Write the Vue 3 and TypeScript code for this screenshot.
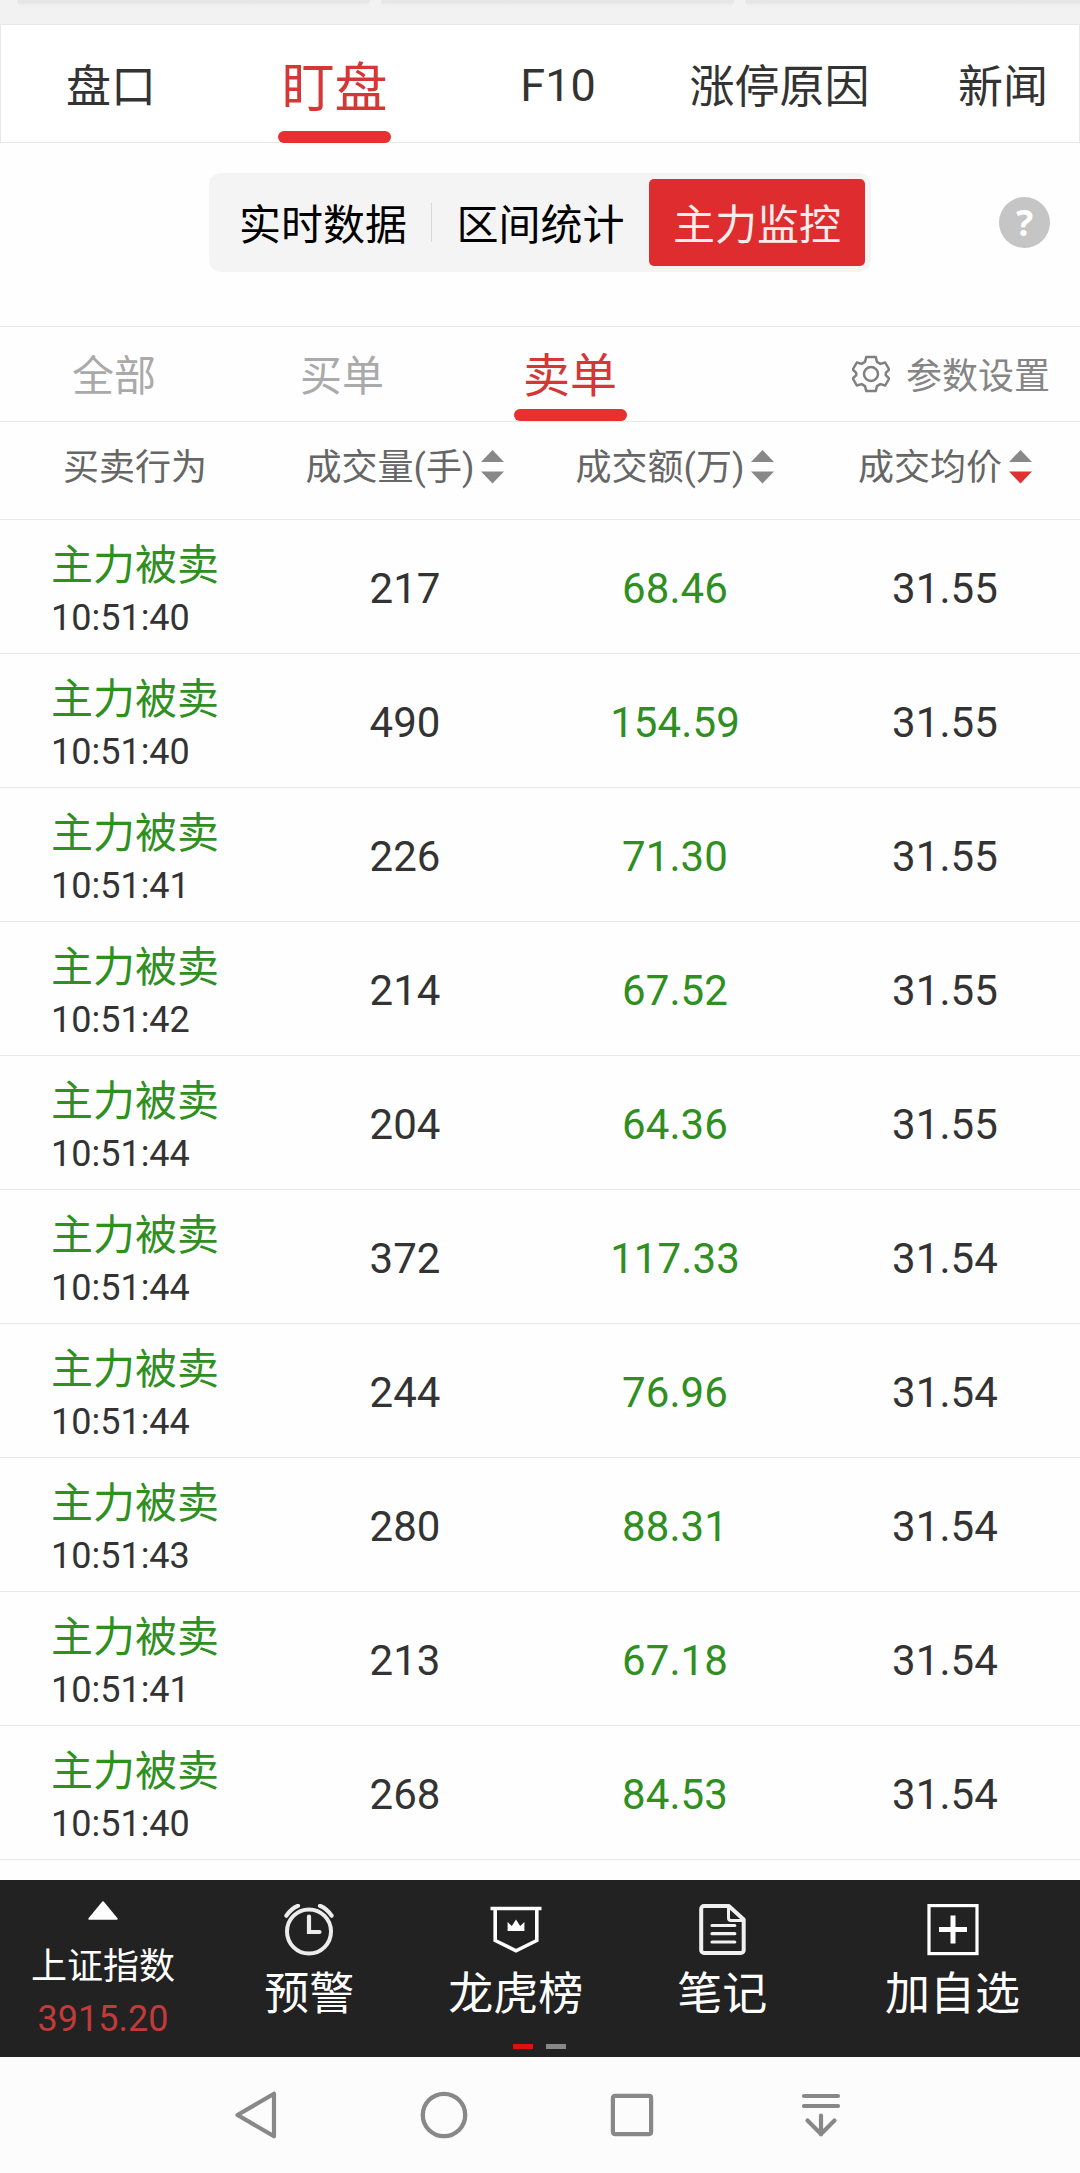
<script setup lang="ts">
interface Trade {
  time: string
  volume: string
  amount: string
  price: string
}

interface Column {
  label: string
  sortable: boolean
  descending?: boolean
}

const tabs: string[] = ['盘口', '盯盘', 'F10', '涨停原因', '新闻']
const modes: string[] = ['实时数据', '区间统计', '主力监控']
const filters: string[] = ['全部', '买单', '卖单']

const columns: Column[] = [
  { label: '买卖行为', sortable: false },
  { label: '成交量(手)', sortable: true },
  { label: '成交额(万)', sortable: true },
  { label: '成交均价', sortable: true, descending: true },
]

const trades: Trade[] = [
  { time: '10:51:40', volume: '217', amount: '68.46', price: '31.55' },
  { time: '10:51:40', volume: '490', amount: '154.59', price: '31.55' },
  { time: '10:51:41', volume: '226', amount: '71.30', price: '31.55' },
  { time: '10:51:42', volume: '214', amount: '67.52', price: '31.55' },
  { time: '10:51:44', volume: '204', amount: '64.36', price: '31.55' },
  { time: '10:51:44', volume: '372', amount: '117.33', price: '31.54' },
  { time: '10:51:44', volume: '244', amount: '76.96', price: '31.54' },
  { time: '10:51:43', volume: '280', amount: '88.31', price: '31.54' },
  { time: '10:51:41', volume: '213', amount: '67.18', price: '31.54' },
  { time: '10:51:40', volume: '268', amount: '84.53', price: '31.54' },
]
</script>

<template>
  <div class="screen">
    <div class="strip">
      <span class="strip-card first"></span>
      <span class="strip-card"></span>
      <span class="strip-card last"></span>
    </div>

    <nav class="tabs">
      <div v-for="(tab, i) in tabs" :key="tab" class="tab" :class="{ active: i === 1, latin: tab === 'F10' }">
        <span class="tab-text">{{ tab }}</span>
      </div>
    </nav>

    <section class="modes">
      <div class="segment">
        <div v-for="(mode, i) in modes" :key="mode" class="mode" :class="{ active: i === 2, divided: i === 0 }">
          {{ mode }}
        </div>
      </div>
      <div class="help">?</div>
    </section>

    <section class="filters">
      <div v-for="(f, i) in filters" :key="f" class="filter" :class="{ active: i === 2 }">
        <span class="filter-text">{{ f }}</span>
      </div>
      <div class="settings">
        <svg class="gear" width="38" height="38" viewBox="0 0 38 38" fill="none" stroke="#808080" stroke-width="2.5" stroke-linejoin="round">
          <path d="M14.3 1.9h9.4l1.3 5 3.4 2 4.8-1.4 4 7-3.4 3.3v2.4l3.4 3.3-4 7-4.8-1.4-3.4 2-1.3 5h-9.4l-1.3-5-3.4-2-4.8 1.4-4-7 3.4-3.3v-2.4l-3.4-3.3 4-7 4.8 1.4 3.4-2z" />
          <circle cx="19" cy="19" r="7" />
        </svg>
        <span class="settings-text">参数设置</span>
      </div>
    </section>

    <section class="head">
      <div v-for="c in columns" :key="c.label" class="head-cell">
        <span class="head-text">{{ c.label }}</span>
        <svg v-if="c.sortable" class="sort" width="23" height="34" viewBox="0 0 23 34">
          <path d="M11.5 0 23 12H0z" fill="#888" />
          <path d="M0 21.5h23L11.5 33.5z" :fill="c.descending ? '#e03030' : '#888'" />
        </svg>
      </div>
    </section>

    <section class="rows">
      <div v-for="(t, i) in trades" :key="i" class="row">
        <div class="action">
          <span class="kind">主力被卖</span>
          <span class="time">{{ t.time }}</span>
        </div>
        <div class="num">{{ t.volume }}</div>
        <div class="num green">{{ t.amount }}</div>
        <div class="num">{{ t.price }}</div>
      </div>
    </section>

    <footer class="toolbar">
      <div class="index">
        <svg class="caret" width="30" height="19" viewBox="0 0 30 19">
          <path d="M15 1.2 28.8 17.8H1.2z" fill="#fff" stroke="#fff" stroke-width="1.8" stroke-linejoin="round" />
        </svg>
        <span class="index-name">上证指数</span>
        <span class="index-value">3915.20</span>
      </div>
      <div class="tool">
        <svg width="52" height="52" viewBox="0 0 52 52" fill="none" stroke="#ececec" stroke-width="4" stroke-linecap="round">
          <circle cx="26" cy="27.5" r="22" />
          <path d="M26 12.5V28h10.5" stroke-width="4.2" />
          <path d="M3.4 11.7Q8 4.7 15 1.8M48.6 11.7Q44 4.7 37 1.8" stroke-width="4.2" />
        </svg>
        <span>预警</span>
      </div>
      <div class="tool">
        <svg width="52" height="52" viewBox="0 0 52 52" fill="none" stroke="#fff" stroke-width="3.6">
          <path d="M.5 4.5h51" />
          <path d="M5.2 4.5v32L26 46.8 46.8 36.500V4.500" />
          <path d="M17.600 18l4.200 4L26 15.500l4.200 6.500 4.200-4v9H17.600z" fill="#fff" stroke="none" />
        </svg>
        <span>龙虎榜</span>
      </div>
      <div class="tool">
        <svg width="52" height="52" viewBox="0 0 52 52" fill="none" stroke="#f0f0f0" stroke-width="4" stroke-linejoin="round" stroke-linecap="round">
          <path d="M8 2h24.800L47.700 15.500v30.700a2.800 2.800 0 0 1-2.800 2.800H8a2.800 2.800 0 0 1-2.800-2.800V4.800A2.800 2.800 0 0 1 8 2z" />
          <path d="M32.500 3v11a2.500 2.500 0 0 0 2.500 2.500h11.500" stroke-width="3" />
          <path d="M16 21.500H38.800M16 29.700H38.800M16 38H38.800" stroke-width="3.200" />
        </svg>
        <span>笔记</span>
      </div>
      <div class="tool wide">
        <svg width="52" height="52" viewBox="0 0 52 52" fill="none" stroke="#fff">
          <rect x="2" y="1.600" width="48" height="48" stroke-width="3.200" />
          <path d="M26 11.600v28M12 25.600h28" stroke-width="5" />
        </svg>
        <span>加自选</span>
      </div>
      <div class="pager">
        <i class="dot on"></i>
        <i class="dot"></i>
      </div>
    </footer>

    <div class="system">
      <svg width="48" height="50" viewBox="0 0 48 50" fill="none" stroke="#888" stroke-width="4.200" stroke-linejoin="round">
        <path d="M5.500 25 42 3.700v42.600z" />
      </svg>
      <svg width="48" height="50" viewBox="0 0 48 50" fill="none" stroke="#888" stroke-width="4.300">
        <circle cx="24" cy="25" r="21.200" />
      </svg>
      <svg width="48" height="50" viewBox="0 0 48 50" fill="none" stroke="#888" stroke-width="4.200">
        <rect x="4.900" y="5.900" width="38.200" height="38.200" rx="2" />
      </svg>
      <svg class="drop" width="48" height="50" viewBox="0 0 48 50" fill="none" stroke="#888" stroke-width="4.200" stroke-linecap="round" stroke-linejoin="round">
        <path d="M7 6h34M7 16h34M24 25.500v19M10.500 30.500 24 44l13.500-13.500" />
      </svg>
    </div>
  </div>
</template>

<style>
body {
  margin: 0;
  background: #fff;
}
</style>

<style scoped>
.screen {
  width: 1080px;
  height: 2173px;
  display: flex;
  flex-direction: column;
  overflow: hidden;
  background: #fefefe;
  color: #333;
  font-family: Roboto, "Noto Sans CJK SC", sans-serif;
}

.strip {
  height: 24px;
  flex: none;
  display: flex;
  gap: 11px;
  padding-left: 17px;
  background: #f2f2f2;
}
.strip-card {
  width: 353px;
  height: 8px;
  border-radius: 0 0 8px 8px;
  background: linear-gradient(#e6e6e6 0 3px, #ededed 4px, #f2f2f2);
}
.strip-card.last {
  width: 335px;
  border-radius: 0 0 0 8px;
}

.tabs {
  box-sizing: border-box;
  height: 119px;
  flex: none;
  display: grid;
  grid-template-columns: 220px 227px 220px 223px 224px;
  border: 1px solid #e8e8e8;
  background: #fff;
}
.tab {
  display: flex;
  flex-direction: column;
  align-items: center;
  font-size: 45px;
  line-height: 60px;
  padding-top: 33px;
  height: 84px;
}
.tab.latin {
  padding-top: 31px;
  height: 86px;
}
.tab.active {
  padding-top: 34px;
  height: 84px;
  font-size: 53px;
  color: #d43735;
}
.tab.active::after {
  content: "";
  width: 113px;
  height: 12px;
  margin-top: 12px;
  flex: none;
  border-radius: 6px;
  background: #e83030;
}

.modes {
  height: 183px;
  flex: none;
  display: flex;
  align-items: flex-start;
}
.segment {
  box-sizing: border-box;
  width: 662px;
  height: 99px;
  margin: 30px 0 0 209px;
  padding: 6px;
  display: flex;
  align-items: center;
  border-radius: 12px;
  background: #f4f4f4;
}
.mode {
  width: 217px;
  line-height: 87px;
  height: 87px;
  padding-top: 3px;
  box-sizing: border-box;
  text-align: center;
  font-size: 42px;
  color: #000;
}
.mode.divided {
  height: 39px;
  line-height: 39px;
  border-right: 1px solid #d8d8d8;
}
.mode.active {
  width: 216px;
  border-radius: 5px;
  background: #df2d2f;
  color: #fdecec;
}
.help {
  width: 51px;
  height: 51px;
  margin: 54px 0 0 128px;
  border-radius: 50%;
  background: #c5c5c5;
  color: #fff;
  font: 700 36px/52px "Noto Sans", sans-serif;
  text-align: center;
}

.filters {
  box-sizing: border-box;
  height: 96px;
  flex: none;
  display: flex;
  border-top: 1px solid #e8e8e8;
  border-bottom: 1px solid #e8e8e8;
}
.filter {
  width: 228px;
  height: 95px;
  display: flex;
  flex-direction: column;
  align-items: center;
  font-size: 42px;
  line-height: 60px;
  padding-top: 20px;
  box-sizing: border-box;
  color: #aaa;
}
.filter.active {
  padding-top: 19px;
  font-size: 47px;
  color: #d43735;
}
.filter.active::after {
  content: "";
  width: 113px;
  height: 12px;
  margin-top: 3px;
  flex: none;
  border-radius: 6px;
  background: #e83030;
}
.settings {
  display: flex;
  align-items: center;
  margin-left: 168px;
  height: 94px;
  font-size: 36px;
  line-height: 60px;
  color: #858585;
}
.gear {
  margin-right: 16px;
}
.settings-text {
  padding-top: 5px;
}

.head {
  box-sizing: border-box;
  height: 98px;
  flex: none;
  display: grid;
  grid-template-columns: repeat(4, 270px);
  border-bottom: 1px solid #e8e8e8;
}
.head-cell {
  display: flex;
  justify-content: center;
  align-items: center;
  height: 90px;
  font-size: 36px;
  line-height: 50px;
  color: #666;
}
.head-text {
  padding-top: 2px;
}
.sort {
  margin-left: 7px;
}

.rows {
  height: 1360px;
  flex: none;
}
.row {
  box-sizing: border-box;
  height: 134px;
  display: grid;
  grid-template-columns: repeat(4, 270px);
  border-bottom: 1px solid #e8e8e8;
}
.action {
  display: flex;
  flex-direction: column;
  padding: 16px 0 0 51px;
}
.kind {
  font-size: 42px;
  line-height: 60px;
  color: #2f8f1f;
}
.time {
  font-size: 36px;
  line-height: 44px;
}
.num {
  padding-top: 4px;
  text-align: center;
  font-size: 42px;
  line-height: 130px;
  letter-spacing: 0.1px;
}
.green {
  color: #2f8f1f;
}

.toolbar {
  position: relative;
  height: 177px;
  flex: none;
  display: flex;
  background: #222;
  color: #fff;
}
.index {
  width: 206px;
  display: flex;
  flex-direction: column;
  align-items: center;
  font-size: 36px;
  line-height: 52px;
}
.caret {
  margin-top: 21px;
}
.index-name {
  margin-top: 21px;
}
.index-value {
  color: #c03b39;
}
.tool {
  width: 206.5px;
  padding-top: 24px;
  display: flex;
  flex-direction: column;
  align-items: center;
  font-size: 45px;
  line-height: 60px;
}
.tool span {
  margin-top: 9px;
}
.tool.wide {
  width: 254px;
}
.pager {
  position: absolute;
  left: 513px;
  top: 164px;
  display: flex;
  gap: 13px;
}
.dot {
  width: 20px;
  height: 5px;
  background: #888;
}
.dot.on {
  background: #e01010;
}

.system {
  height: 116px;
  flex: none;
  display: flex;
  gap: 140px;
  align-items: flex-start;
  padding: 33px 0 0 232px;
  box-sizing: border-box;
  background: #fcfcfc;
}
.drop {
  margin-left: 1px;
}
</style>
